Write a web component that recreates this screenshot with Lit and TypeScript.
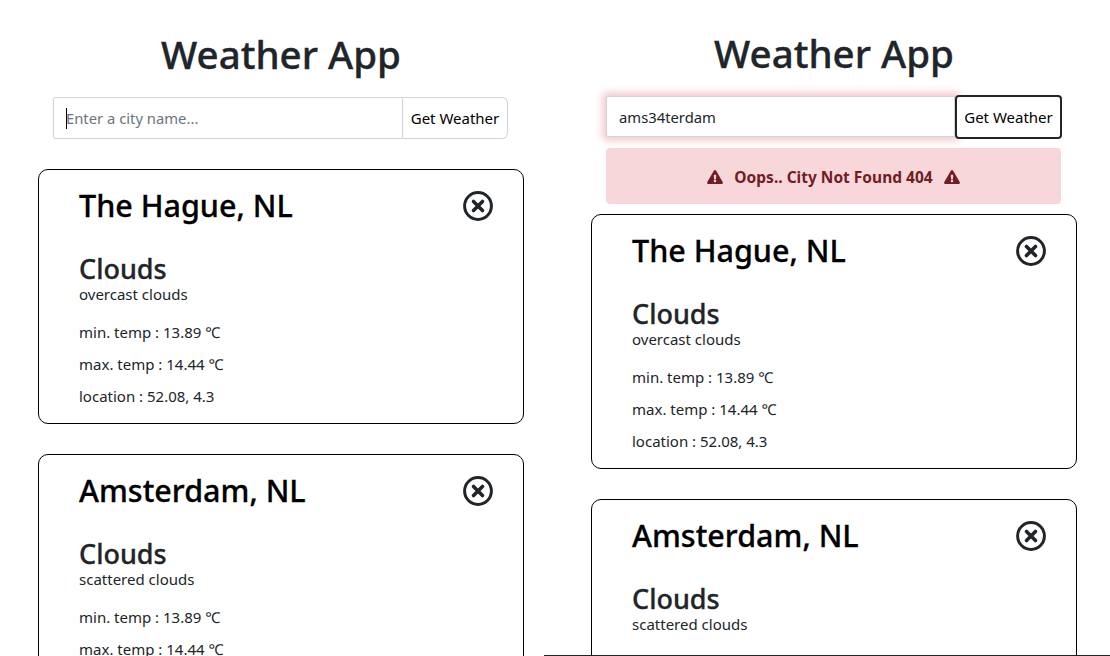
import { LitElement, html, css, svg } from "lit";
import { customElement, property } from "lit/decorators.js";

const FONT = css`"Noto Sans", "Open Sans", "Liberation Sans", sans-serif`;

const warn = svg`<path d="M569.517 440.013C587.975 472.007 564.806 512 527.94 512H48.054c-36.937 0-59.999-40.055-41.577-71.987L246.423 23.985c18.467-32.009 64.72-31.951 83.154 0l239.94 416.028zM288 354c-25.405 0-46 20.595-46 46s20.595 46 46 46 46-20.595 46-46-20.595-46-46-46zm-43.673-165.346l7.418 136c.347 6.364 5.609 11.346 11.982 11.346h48.546c6.373 0 11.635-4.982 11.982-11.346l7.418-136c.375-6.874-5.098-12.654-11.982-12.654h-63.383c-6.884 0-12.356 5.78-11.981 12.654z"/>`;

@customElement("weather-card")
class WeatherCard extends LitElement {
  @property() city = "";
  @property() desc = "";

  static styles = css`
    :host { display: block; font-family: ${FONT}; }
    .card {
      box-sizing: border-box;
      width: 486px;
      height: 255px;
      border: 1px solid #000;
      border-radius: 10px;
      padding: 14px 30px 0 40px;
      background: #fff;
    }
    .head { display: flex; justify-content: space-between; align-items: center; height: 44px; }
    h2 { margin: 0 0 2px; font-size: 30.5px; font-weight: 500; color: #000; line-height: 42px; -webkit-text-stroke: 0.3px #000; }
    .close { display: block; width: 30px; height: 30px; }
    h3 { margin: 24px 0 0; font-size: 27px; font-weight: 500; color: #212529; line-height: 34px; -webkit-text-stroke: 0.3px #212529; }
    .desc { margin: 0; font-size: 15px; color: #212529; line-height: 16px; }
    .stats { margin-top: 19px; display: flex; flex-direction: column; gap: 10px; }
    .stats div { font-size: 15px; color: #212529; line-height: 22px; }
  `;

  render() {
    return html`<div class="card">
      <div class="head">
        <h2>${this.city}</h2>
        <svg class="close" viewBox="0 0 30 30" fill="none" stroke="#212529">
          <circle cx="15" cy="15" r="13.4" stroke-width="3"></circle>
          <path d="M10.5 10.5l9 9M19.5 10.5l-9 9" stroke-width="3.6" stroke-linecap="round"></path>
        </svg>
      </div>
      <h3>Clouds</h3>
      <p class="desc">${this.desc}</p>
      <div class="stats">
        <div>min. temp : 13.89 ℃</div>
        <div>max. temp : 14.44 ℃</div>
        <div>location : 52.08, 4.3</div>
      </div>
    </div>`;
  }
}

@customElement("app-root")
class AppRoot extends LitElement {
  static styles = css`
    :host { display: flex; width: 1110px; height: 656px; overflow: hidden; font-family: ${FONT}; background: #fff; }
    .pane { box-sizing: border-box; height: 656px; overflow: hidden; }
    .left { width: 544px; padding: 27px 0 0 38px; }
    .right { width: 566px; padding: 26px 0 0 47px; border-bottom: 1px solid #212529; }
    .col { width: 486px; }
    h1 { margin: 0; text-align: center; font-size: 38.5px; font-weight: 500; line-height: 54px; color: #212529; -webkit-text-stroke: 0.35px #212529; }
    .group { display: flex; box-sizing: border-box; width: 455px; height: 42px; margin: 16px 0 0 15px; font-size: 14.8px; }
    .field {
      flex: 1; box-sizing: border-box; display: flex; align-items: center;
      border: 1px solid #ced4da; border-radius: 2px 0 0 2px; padding-left: 12px; background: #fff;
    }
    .left .field .ph { color: #6c757d; position: relative; }
    .left .field .ph::before {
      content: ""; position: absolute; left: 0; top: 50%; width: 1px; height: 21px;
      margin-top: -10px; background: #000;
    }
    .btn {
      box-sizing: border-box; width: 105px; display: flex; align-items: center; justify-content: center;
      border: 1px solid #ced4da; border-left: 0; border-radius: 0 6px 6px 0; color: #000; font-size: 15px;
    }
    .right .group { height: 44px; margin-top: 15px; align-items: center; width: 456px; }
    .right .field { height: 41px; margin-top: -2px; padding-top: 1px; box-shadow: 0 0 7px 4px rgba(220, 53, 69, 0.25); color: #212529; }
    .right .btn {
      height: 44px; width: 107px; border: 2px solid #212529; border-radius: 4px; position: relative; background: #fff;
    }
    .alert {
      box-sizing: border-box; width: 455px; height: 56px; margin: 9px 0 10px 15px; padding-top: 1px;
      background: #f8d7da; color: #721c24; border-radius: 4px;
      display: flex; align-items: center; justify-content: center; gap: 11px;
      font-size: 15.5px; font-weight: 700;
      position: relative;
    }
    .alert svg { width: 16px; height: 14px; fill: #721c24; display: block; }
    .left .cards { margin-top: 30px; }
    .cards { display: flex; flex-direction: column; gap: 30px; }
  `;

  cards() {
    return html`<div class="cards">
      <weather-card city="The Hague, NL" desc="overcast clouds"></weather-card>
      <weather-card city="Amsterdam, NL" desc="scattered clouds"></weather-card>
    </div>`;
  }

  render() {
    return html`
      <section class="pane left"><div class="col">
        <h1>Weather App</h1>
        <div class="group">
          <div class="field"><span class="ph">Enter a city name...</span></div>
          <div class="btn">Get Weather</div>
        </div>
        ${this.cards()}
      </div></section>
      <section class="pane right"><div class="col">
        <h1>Weather App</h1>
        <div class="group">
          <div class="field">ams34terdam</div>
          <div class="btn">Get Weather</div>
        </div>
        <div class="alert">
          <svg viewBox="0 0 576 512">${warn}</svg>
          <span>Oops.. City Not Found 404</span>
          <svg viewBox="0 0 576 512">${warn}</svg>
        </div>
        ${this.cards()}
      </div></section>
    `;
  }
}
